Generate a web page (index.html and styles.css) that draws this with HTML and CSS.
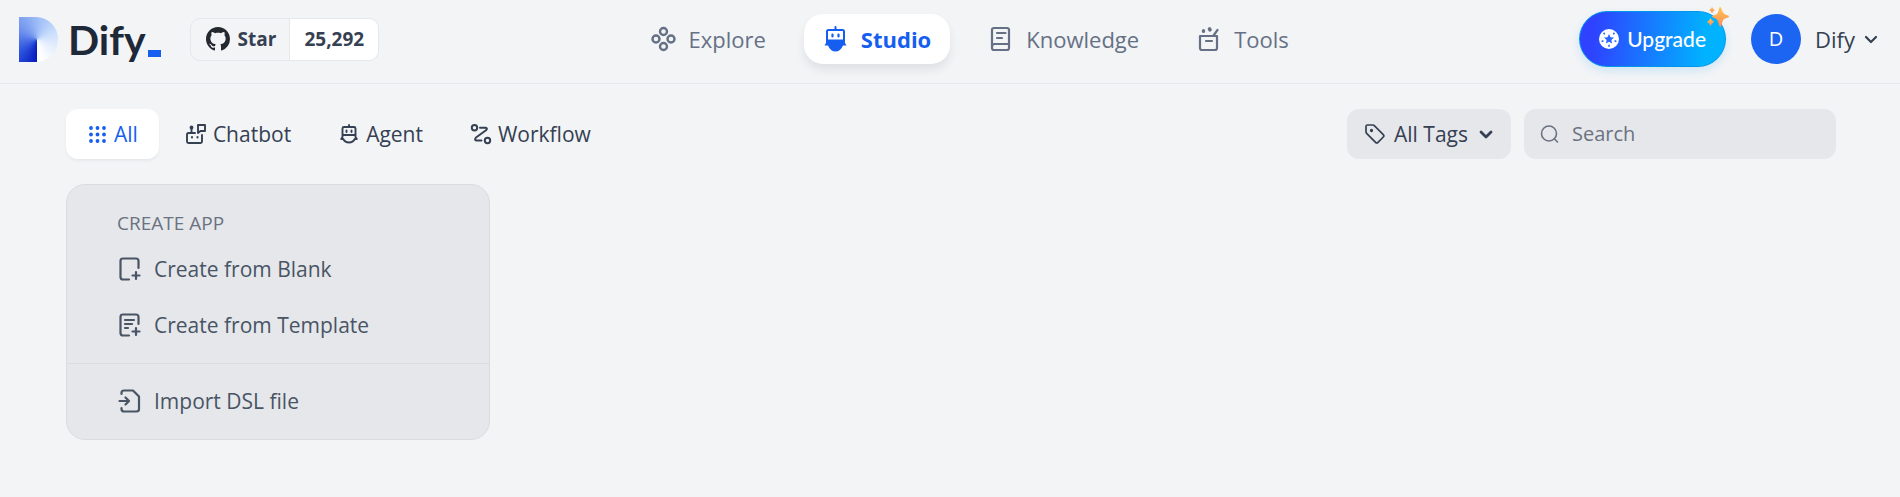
FILE: index.html
```html
<!DOCTYPE html>
<html lang="en">
<head>
    <meta charset="UTF-8">
    <meta name="viewport" content="width=device-width, initial-scale=1.0">
    <title>Studio - Dify</title>
    <link rel="stylesheet" href="styles.css">
</head>
<body>
    <header class="header">
        <div class="header-left">
            <a href="#" class="logo">
                <span class="logo-mark"></span>
                <span class="logo-text">Dify</span>
                <span class="logo-cursor"></span>
            </a>
            <div class="github">
                <a href="#" class="github-star">
                    <svg width="24" height="24" viewBox="0 0 16 16" fill="#24292f"><path d="M8 0C3.58 0 0 3.58 0 8c0 3.54 2.29 6.53 5.47 7.59.4.07.55-.17.55-.38 0-.19-.01-.82-.01-1.49-2.01.37-2.53-.49-2.69-.94-.09-.23-.48-.94-.82-1.13-.28-.15-.68-.52-.01-.53.63-.01 1.08.58 1.23.82.72 1.21 1.87.87 2.33.66.07-.52.28-.87.51-1.07-1.78-.2-3.64-.89-3.64-3.95 0-.87.31-1.59.82-2.15-.08-.2-.36-1.02.08-2.12 0 0 .67-.21 2.2.82.64-.18 1.32-.27 2-.27s1.36.09 2 .27c1.53-1.04 2.2-.82 2.2-.82.44 1.1.16 1.92.08 2.12.51.56.82 1.27.82 2.15 0 3.07-1.87 3.75-3.65 3.95.29.25.54.73.54 1.48 0 1.07-.01 1.93-.01 2.2 0 .21.15.46.55.38A8.01 8.01 0 0 0 16 8c0-4.42-3.58-8-8-8z"/></svg>
                    Star
                </a>
                <a href="#" class="github-count">25,292</a>
            </div>
        </div>

        <nav class="nav">
            <a href="#" class="nav-item">
                <svg class="icon" width="24" height="24" viewBox="0 0 24 24" stroke-width="2.4">
                    <circle cx="12.500" cy="4.500" r="3.500"/><circle cx="5" cy="12" r="3.500"/><circle cx="20" cy="12" r="3.500"/><circle cx="12.500" cy="19.500" r="3.500"/>
                </svg>
                Explore
            </a>
            <a href="#" class="nav-item active">
                <svg class="icon" width="24" height="24" viewBox="0 0 24 24" stroke-width="2">
                    <path d="M12.500 0v3M4 13V4.500Q4 3 5.500 3h14Q21 3 21 4.500V13"/>
                    <path d="M9.500 7.500v2M15.500 7.500v2" stroke-width="2.200"/>
                    <path d="M3 12.500h19v3.500l1.500 2.500h-3.500Q17.500 24.500 12.500 24.500T5 18.500H1.500L3 16z" fill="currentColor" stroke="none"/>
                </svg>
                Studio
            </a>
            <a href="#" class="nav-item">
                <svg class="icon" width="24" height="24" viewBox="0 0 24 24" stroke-width="2.2">
                    <path d="M6 1h13q2 0 2 2v18q0 2-2 2H6q-2 0-2-2V3q0-2 2-2zM4 20q0-3 2.500-3H21M9 6h8.500M9 11h5"/>
                </svg>
                Knowledge
            </a>
            <a href="#" class="nav-item">
                <svg class="icon" width="24" height="24" viewBox="0 0 24 24" stroke-width="2.2">
                    <path d="M4 9h17v12q0 2-2 2H6q-2 0-2-2zM10 14h6M17.500 8.500L21.500 3"/>
                    <path d="M7.500 3.500v1" stroke-width="3.200"/><path d="M13.500 2l.500.800" stroke-width="3.600"/>
                </svg>
                Tools
            </a>
        </nav>

        <div class="header-right">
            <button type="button" class="upgrade">
                <svg width="20" height="20" viewBox="0 0 20 20">
                    <circle cx="10" cy="10" r="10" fill="#fff"/>
                    <path d="M10 5l1.500 3.200 3.500.400-2.600 2.400.700 3.500-3.100-1.800-3.100 1.800.700-3.500L5 8.600l3.500-.400z" fill="#2a66ff"/>
                    <path d="M4.600 3.800l1.100 1.600M15.400 3.800l-1.100 1.600M2.600 12.400l1.900-.600M17.400 12.400l-1.900-.600M10 15.800v2" stroke="#2a66ff" stroke-width="1.600"/>
                </svg>
                Upgrade
                <svg class="sparkles" width="22" height="20" viewBox="0 0 22 20">
                    <defs><linearGradient id="spark" x1="0" y1="0" x2="0" y2="1"><stop offset="0" stop-color="#fdc64d"/><stop offset="1" stop-color="#fd8a5e"/></linearGradient></defs>
                    <g fill="url(#spark)">
                        <path d="M13 0q1 0 1.500 2 1 4 3 5 1 .700 3 1.200 1.500.500 1.500 1.300t-1.500 1.300q-3 .700-4 1.700t-2 5.500Q14 20 13.300 20t-1.300-2q-.700-3.500-1.800-5T7 10.800Q5 10.300 5 9.500t2-1.300q2.500-.700 3.500-2T12 2q.300-2 1-2z"/>
                        <path d="M5 0q.900 2.200 3 3-2.100.900-3 3.200Q4.100 3.900 2 3q2.100-.800 3-3z"/>
                        <path d="M3.500 11q1.200 2.900 3.700 4-2.500 1.100-3.700 4-1.200-2.900-3.500-4 2.300-1.100 3.500-4z"/>
                    </g>
                </svg>
            </button>
            <button type="button" class="account">
                <span class="avatar">D</span>
                Dify
                <svg class="icon" width="14" height="14" viewBox="0 0 14 14" stroke-width="2.200"><path d="M2 5l5 5 5-5"/></svg>
            </button>
        </div>
    </header>

    <main class="content">
        <div class="toolbar">
            <div class="tabs">
                <button type="button" class="tab active">
                    <svg width="20" height="20" viewBox="0 0 20 20" fill="currentColor">
                        <circle cx="4" cy="4" r="1.900"/><circle cx="10.500" cy="4" r="1.900"/><circle cx="17" cy="4" r="1.900"/>
                        <circle cx="4" cy="10.500" r="1.900"/><circle cx="10.500" cy="10.500" r="1.900"/><circle cx="17" cy="10.500" r="1.900"/>
                        <circle cx="4" cy="17" r="1.900"/><circle cx="10.500" cy="17" r="1.900"/><circle cx="17" cy="17" r="1.900"/>
                    </svg>
                    All
                </button>
                <button type="button" class="tab">
                    <svg class="icon" width="20" height="20" viewBox="0 0 20 20" stroke-width="1.900">
                        <path d="M9 9H2.500Q1 9 1 10.500v7Q1 19 2.500 19h12q1.500 0 1.500-1.500V11M5.500 4v5"/>
                        <circle cx="5.500" cy="3.500" r="1" fill="currentColor"/>
                        <path d="M12 1h7v6h-4.500L12 9z"/>
                        <path d="M6 13v.500M11.500 13v.500" stroke-width="2"/>
                    </svg>
                    Chatbot
                </button>
                <button type="button" class="tab">
                    <svg class="icon" width="20" height="20" viewBox="0 0 20 20" stroke-width="1.900">
                        <path d="M10 1v2M5 3h10q1.500 0 1.500 1.500V11h-13V4.500Q3.500 3 5 3zM3.500 11v2L2.200 15h2Q6 18.500 10 18.500t5.800-3.500h2L16.500 13v-2"/>
                        <path d="M7.500 6.500v1.500M12.500 6.500v1.500" stroke-width="1.900"/>
                    </svg>
                    Agent
                </button>
                <button type="button" class="tab">
                    <svg class="icon" width="20" height="20" viewBox="0 0 20 20" stroke-width="2">
                        <circle cx="3.500" cy="3.700" r="2.700"/><circle cx="16.500" cy="16.500" r="2.700"/>
                        <path d="M9 3.700h5.500q2.500.500.500 2.500L5 13.500q-2 2.500.500 3H10.500"/>
                    </svg>
                    Workflow
                </button>
            </div>
            <div class="filters">
                <button type="button" class="tags">
                    <svg class="icon" width="20" height="20" viewBox="0 0 20 20" stroke-width="1.700">
                        <path d="M1 2.500Q1 1 2.500 1H8q.700 0 1.300.600l9 9q1.200 1.200 0 2.400l-5.300 5.300q-1.200 1.200-2.400 0l-9-9Q1 8.700 1 8z"/>
                        <circle cx="6.500" cy="6.500" r=".800" fill="currentColor"/>
                    </svg>
                    All Tags
                    <svg class="icon tags-arrow" width="14" height="14" viewBox="0 0 14 14" stroke-width="2.800"><path d="M2 5l5 5 5-5"/></svg>
                </button>
                <label class="search">
                    <svg class="icon" width="20" height="20" viewBox="0 0 20 20" stroke-width="1.600"><circle cx="9" cy="9.500" r="7.500"/><path d="M14.500 15l3 3"/></svg>
                    <input type="text" placeholder="Search" aria-label="Search">
                </label>
            </div>
        </div>

        <div class="apps">
            <section class="create-card">
                <div class="create-group">
                    <h2>CREATE APP</h2>
                    <button type="button" class="create-item">
                        <svg class="icon" width="24" height="24" viewBox="0 0 24 24" stroke-width="2.2">
                            <path d="M12 22.500H6q-2.500 0-2.500-2.500V4Q3.500 1.500 6 1.500h13q2.500 0 2.500 2.500v7M15.500 18.500h7M19 15v7"/>
                        </svg>
                        Create from Blank
                    </button>
                    <button type="button" class="create-item">
                        <svg class="icon" width="24" height="24" viewBox="0 0 24 24" stroke-width="2.2">
                            <path d="M12 22.500H6q-2.500 0-2.500-2.500V4Q3.500 1.500 6 1.500h13q2.500 0 2.500 2.500v7M15.500 18.500h7M19 15v7M8 7h9M8 11h7M8 15h3"/>
                        </svg>
                        Create from Template
                    </button>
                </div>
                <div class="create-group">
                    <button type="button" class="create-item">
                        <svg class="icon" width="24" height="24" viewBox="0 0 24 24" stroke-width="2.2">
                            <path d="M4.500 5V4Q4.500 1.500 7 1.500h9l6 6V20q0 2.500-2.500 2.500H7Q4.500 22.500 4.500 20v-1M2.500 12h9M8.500 8.500l3.500 3.500-3.500 3.500"/>
                        </svg>
                        Import DSL file
                    </button>
                </div>
            </section>
        </div>
    </main>
</body>
</html>
```
FILE: styles.css
```css
* {
    box-sizing: border-box;
}
body {
    font-family: 'Open Sans', 'Noto Sans', sans-serif;
    background: #f2f4f6;
    color: #354052;
    margin: 0;
    font-size: 21px;
    line-height: 28px;
}
a {
    color: inherit;
    text-decoration: none;
}
button {
    font: inherit;
    color: inherit;
    background: none;
    border: none;
    padding: 0;
    cursor: pointer;
}
svg {
    flex-shrink: 0;
}
.icon {
    fill: none;
    stroke: currentColor;
    stroke-linecap: round;
    stroke-linejoin: round;
    overflow: visible;
}

/* header */
.header {
    display: flex;
    justify-content: space-between;
    align-items: center;
    padding: 11px 22px 16px 19px;
    border-bottom: 1px solid #e4e7ec;
}
.header-left, .header-right, .logo, .nav, .account {
    display: flex;
    align-items: center;
}
.header-left {
    gap: 29px;
}
.logo-mark {
    width: 39px;
    height: 45px;
    border-radius: 0 22px 22px 0;
    background: conic-gradient(from 180deg at 47% 50%, #0519bd, #2a50dc 50deg, #6f92ee 120deg, #9dbcf7 180deg, #c6dbfc 240deg, #e3edfe 290deg, #fff 350deg);
}
.logo-text {
    font-family: Lato, sans-serif;
    font-weight: 700;
    font-size: 41px;
    line-height: 45px;
    color: #1d2939;
    margin-left: 10px;
}
.logo-cursor {
    width: 13px;
    height: 7px;
    margin: 28px 0 0 2px;
    background: #155eef;
}
.github {
    display: flex;
    border: 1px solid #e4e7ec;
    border-radius: 10px;
    overflow: hidden;
    font-size: 19px;
    font-weight: 700;
    line-height: 41px;
}
.github-star {
    display: flex;
    align-items: center;
    gap: 8px;
    padding: 0 13px 0 15px;
}
.github-count {
    padding: 0 14px;
    background: #fff;
    border-left: 1px solid #e4e7ec;
}
.nav {
    gap: 19px;
}
.nav-item {
    display: flex;
    align-items: center;
    gap: 14px;
    height: 50px;
    padding: 0 19px;
    border-radius: 19px;
    font-size: 22px;
    color: #667085;
}
.nav-item.active {
    background: #fff;
    color: #155eef;
    font-weight: 700;
    box-shadow: 0 6px 10px rgba(16, 24, 40, 0.08);
}
.header-right {
    gap: 25px;
    padding-left: 19px;
}
.upgrade {
    position: relative;
    display: flex;
    align-items: center;
    gap: 8px;
    height: 56px;
    padding: 0 19px;
    border: 1px solid #0096ea;
    border-radius: 28px;
    background: linear-gradient(95deg, #2e42ff 10%, #00b2ff 85%) border-box;
    box-shadow: 0 4px 8px rgba(0, 150, 234, 0.15);
    color: #fff;
    font-family: Lato, sans-serif;
    font-size: 21px;
    font-weight: 500;
}
.sparkles {
    position: absolute;
    top: -5px;
    right: -4px;
}
.account {
    gap: 9px;
    font-size: 22px;
}
.avatar {
    width: 50px;
    margin-right: 5px;
    border-radius: 50%;
    background: #1c64f2;
    color: #fff;
    font-size: 20px;
    line-height: 50px;
    text-align: center;
}

/* app list */
.content {
    padding: 25px 64px 57px 66px;
}
.toolbar, .tabs, .filters {
    display: flex;
    align-items: center;
}
.toolbar {
    justify-content: space-between;
    margin-bottom: 25px;
}
.tabs {
    gap: 6px;
}
.tab {
    display: flex;
    align-items: center;
    gap: 7px;
    height: 50px;
    padding: 0 21px;
    border-radius: 12px;
}
.tab.active {
    background: #fff;
    color: #155eef;
    box-shadow: 0 2px 3px rgba(16, 24, 40, 0.05);
}
.filters {
    gap: 13px;
}
.tags, .search {
    display: flex;
    align-items: center;
    height: 50px;
    border-radius: 12px;
    background: #e5e7eb;
}
.tags {
    gap: 9px;
    padding: 0 18px;
}
.tags-arrow {
    margin-left: 2px;
}
.search {
    gap: 12px;
    width: 312px;
    padding: 0 16px;
    color: #6b7280;
}
.search input {
    flex: 1;
    min-width: 0;
    padding: 0;
    border: none;
    outline: none;
    background: none;
    font: inherit;
    font-size: 20px;
    color: #354052;
}
.search input::placeholder {
    color: #6b7280;
}
.apps {
    display: grid;
    grid-template-columns: repeat(4, 1fr);
    gap: 25px;
}
.create-card {
    border: 1px solid #dadce0;
    border-radius: 19px;
    background: #e5e7eb;
    color: #495464;
}
.create-group {
    padding: 9px 50px 10px;
}
.create-group:first-child {
    padding-top: 24px;
}
.create-group + .create-group {
    border-top: 1px solid #dadce0;
}
.create-group h2 {
    margin: 0 0 4px;
    font-size: 19px;
    line-height: 28px;
    font-weight: 400;
    color: #6b7280;
}
.create-item {
    display: flex;
    align-items: center;
    gap: 13px;
    width: 100%;
    height: 56px;
}
```
